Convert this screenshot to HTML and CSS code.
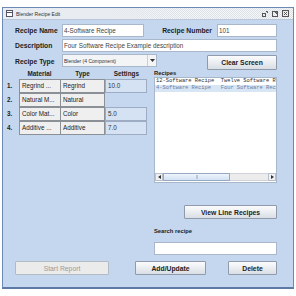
FILE: index.html
```html
<!DOCTYPE html>
<html>
<head>
<meta charset="utf-8">
<link rel="stylesheet" href="styles.css">
</head>
<body>
<div class="window">
  <div class="titlebar">
    <svg class="ticon" width="7" height="7" viewBox="0 0 7 7"><rect x="0.5" y="0.5" width="6" height="6" fill="#fff" stroke="#556"/><line x1="1" y1="2.5" x2="6" y2="2.5" stroke="#556"/></svg>
    <span class="title">Blender Recipe Edit</span>
    <div class="tbtns">
      <svg width="6" height="6" viewBox="0 0 6 6"><rect x="0.5" y="2.5" width="3" height="3" fill="none" stroke="#555"/><path d="M4 0.5h1.5v1.5" fill="none" stroke="#555"/></svg>
      <svg width="6" height="6" viewBox="0 0 6 6"><rect x="0.5" y="0.5" width="5" height="5" fill="none" stroke="#555"/><path d="M3 1.5h1.5v1.5" fill="none" stroke="#555"/></svg>
      <svg width="7" height="7" viewBox="0 0 7 7"><rect x="0.5" y="0.5" width="6" height="6" fill="none" stroke="#555"/><path d="M2 2l3 3M5 2l-3 3" stroke="#555"/></svg>
    </div>
  </div>
  <div class="content">
    <div class="frow r1">
      <span class="lbl w47">Recipe Name</span>
      <div class="input w82">4-Software Recipe</div>
      <span class="lbl grow right">Recipe Number</span>
      <div class="input w60">101</div>
    </div>
    <div class="frow r2">
      <span class="lbl w47">Description</span>
      <div class="input grow">Four Software Recipe Example description</div>
    </div>
    <div class="frow r3">
      <span class="lbl w47">Recipe Type</span>
      <div class="combo"><span class="ctext">Blender (4 Component)</span><span class="carrow"><svg width="5" height="3" viewBox="0 0 5 3"><path d="M0 0h5l-2.5 3z" fill="#333"/></svg></span></div>
      <div class="grow"></div>
      <button class="btn clear">Clear Screen</button>
    </div>
    <div class="main">
      <div class="tablecol">
        <div class="trow head">
          <span class="c-num"></span>
          <span class="c-mat h">Material</span>
          <span class="c-type h">Type</span>
          <span class="c-set h">Settings</span>
        </div>
        <div class="trow">
          <span class="c-num n">1.</span>
          <span class="c-mat cell">Regrind ...</span>
          <span class="c-type cell">Regrind</span>
          <span class="c-set scell">10.0</span>
        </div>
        <div class="trow">
          <span class="c-num n">2.</span>
          <span class="c-mat cell">Natural M...</span>
          <span class="c-type cell">Natural</span>
          <span class="c-set"></span>
        </div>
        <div class="trow">
          <span class="c-num n">3.</span>
          <span class="c-mat cell">Color Mat...</span>
          <span class="c-type cell">Color</span>
          <span class="c-set scell">5.0</span>
        </div>
        <div class="trow">
          <span class="c-num n">4.</span>
          <span class="c-mat cell">Additive ...</span>
          <span class="c-type cell">Additive</span>
          <span class="c-set scell">7.0</span>
        </div>
      </div>
      <div class="rightcol">
        <div class="sublbl">Recipes</div>
        <div class="list">
          <div class="items">
            <div class="item">12-Software Recipe  Twelve Software R</div>
            <div class="item sel">4-Software Recipe   Four Software Rec</div>
          </div>
          <div class="hscroll">
            <span class="arr"><svg width="3" height="4" viewBox="0 0 3 4"><path d="M3 0v4L0 2z" fill="#333"/></svg></span>
            <span class="thumb"><span class="grip"></span></span>
            <span class="track"></span>
            <span class="arr"><svg width="3" height="4" viewBox="0 0 3 4"><path d="M0 0v4l3-2z" fill="#333"/></svg></span>
          </div>
        </div>
        <div class="vrow"><button class="btn view">View Line Recipes</button></div>
        <div class="sublbl search">Search recipe</div>
        <div class="input sinput"></div>
      </div>
    </div>
    <div class="brow">
      <button class="btn disabled start">Start Report</button>
      <button class="btn add">Add/Update</button>
      <button class="btn del">Delete</button>
    </div>
  </div>
</div>
</body>
</html>
```
FILE: styles.css
```css
html, body {
  margin: 0;
  padding: 0;
  background: #ffffff;
}
body {
  width: 296px;
  height: 296px;
  overflow: hidden;
  font-family: "Liberation Sans", Arial, sans-serif;
  color: #222;
}
.window {
  margin: 7px 0 0 2px;
  width: 292px;
  height: 282px;
  box-sizing: border-box;
  border: 1px solid #6d88b5;
  border-bottom: 2px solid #5e79a6;
  background: #c4d7ef;
  display: flex;
  flex-direction: column;
}
.titlebar {
  height: 11px;
  display: flex;
  align-items: center;
  padding: 0 2px 0 2px;
  background:
    linear-gradient(90deg, #e9ecf0 0%, #e9ecf0 35%, rgba(233,236,240,0) 60%),
    repeating-conic-gradient(#dde2e8 0 25%, #f4f6f8 0 50%) 0 0 / 2px 2px;
  border-bottom: 1px solid #b9c6d8;
}
.ticon { margin-left: 1px; }
.title {
  font-size: 5px;
  margin-left: 3px;
  color: #333;
}
.tbtns {
  margin-left: auto;
  display: flex;
  align-items: center;
  gap: 4px;
  padding-right: 2px;
}
.content {
  flex: 1;
  display: flex;
  flex-direction: column;
  padding: 0 16px 0 2px;
}
.frow {
  display: flex;
  align-items: center;
  padding-left: 10px;
}
.r1 { margin-top: 3px; height: 14px; }
.r2 { margin-top: 2px; height: 13px; }
.r3 { margin-top: 2px; height: 15px; }
.lbl {
  font-size: 6.8px;
  font-weight: bold;
  color: #222;
}
.w47 { width: 47px; flex: none; }
.grow { flex: 1; }
.right { text-align: right; padding-right: 5px; }
.input {
  box-sizing: border-box;
  height: 13px;
  background: #fff;
  border: 1px solid #a9b7ca;
  font-size: 6.3px;
  line-height: 11px;
  padding-left: 1px;
  color: #444;
  white-space: nowrap;
  overflow: hidden;
}
.w82 { width: 82px; flex: none; }
.w60 { width: 60px; flex: none; }
.combo {
  width: 95px;
  height: 13px;
  box-sizing: border-box;
  border: 1px solid #a9b7ca;
  background: #f3f4f6;
  display: flex;
  align-items: center;
  margin-top: -2px;
}
.ctext {
  flex: 1;
  font-size: 5px;
  padding-left: 1px;
  color: #333;
}
.carrow {
  width: 8px;
  height: 11px;
  display: flex;
  align-items: center;
  justify-content: center;
  border-left: 1px solid #c7ced8;
}
.btn {
  box-sizing: border-box;
  font-family: "Liberation Sans", Arial, sans-serif;
  font-size: 6.8px;
  font-weight: bold;
  color: #222;
  background: linear-gradient(#fcfcfd, #e9ecf0 55%, #d9dee5);
  border: 1px solid #8f9aab;
  border-radius: 1px;
  padding: 0;
  margin: 0;
}
.clear { width: 70px; height: 15px; margin-top: 2px; }
.main {
  display: flex;
  margin-top: 1px;
}
.tablecol {
  width: 143px;
  flex: none;
}
.trow {
  display: flex;
  height: 14px;
}
.trow.head { height: 9px; align-items: flex-start; }
.c-num { width: 14px; flex: none; font-size: 6.3px; font-weight: bold; }
.c-mat { width: 41px; flex: none; }
.c-type { width: 45px; flex: none; }
.c-set { width: 42px; flex: none; }
.h {
  font-size: 6.4px;
  font-weight: bold;
  text-align: center;
  line-height: 8px;
}
.head .c-set { text-align: right; padding-right: 8px; box-sizing: border-box; }
.n { line-height: 14px; padding-left: 2px; box-sizing: border-box; }
.cell {
  box-sizing: border-box;
  background: #efefef;
  border: 1px solid #8b8f96;
  border-right: none;
  font-size: 6.3px;
  line-height: 12px;
  padding-left: 2px;
  color: #222;
  white-space: nowrap;
  overflow: hidden;
}
.c-type.cell { border-right: 1px solid #8b8f96; }
.scell {
  box-sizing: border-box;
  background: #d4e2f4;
  border: 1px solid #9dacc2;
  font-size: 6.3px;
  line-height: 12px;
  padding-left: 2px;
  color: #333;
}
.rightcol {
  margin-left: 6px;
  flex: 1;
  display: flex;
  flex-direction: column;
}
.sublbl {
  font-size: 5.8px;
  font-weight: bold;
  line-height: 7px;
  height: 7px;
}
.list {
  height: 106px;
  box-sizing: border-box;
  border: 1px solid #a9b7ca;
  background: #fff;
  display: flex;
  flex-direction: column;
}
.items { flex: 1; }
.item {
  font-family: "Liberation Mono", "Courier New", monospace;
  font-size: 5.4px;
  line-height: 7px;
  height: 7px;
  white-space: pre;
  overflow: hidden;
  color: #333;
  padding-left: 1px;
}
.item.sel {
  background: #d8e5f5;
  color: #6b7f9e;
}
.hscroll {
  height: 8px;
  margin: 0 0 1px 0;
  display: flex;
  align-items: stretch;
}
.arr {
  width: 8px;
  display: flex;
  align-items: center;
  justify-content: center;
  background: #eef0f3;
  border: 1px solid #b8c0cc;
  box-sizing: border-box;
}
.thumb {
  width: 67px;
  background: linear-gradient(#eef4fb, #d2e2f4);
  border: 1px solid #98a9c2;
  box-sizing: border-box;
  display: flex;
  align-items: center;
  justify-content: center;
}
.grip { width: 2px; height: 4px; background: #b8c6d8; }
.track { flex: 1; background: #ececec; border-top: 1px solid #d0d4da; border-bottom: 1px solid #d0d4da; }
.vrow {
  display: flex;
  justify-content: flex-end;
  margin-top: 22px;
}
.view { width: 93px; height: 14px; }
.search { margin-top: 9px; }
.sinput { margin-top: 7px; height: 13px; }
.brow {
  display: flex;
  margin-top: 6px;
  padding-left: 10px;
  height: 14px;
}
.start { width: 94px; }
.disabled {
  background: #ebebeb;
  color: #9a9a9a;
  font-weight: normal;
  border: 1px solid #b3bac4;
}
.add { width: 71px; margin-left: 26px; }
.del { width: 49px; margin-left: auto; }
```
